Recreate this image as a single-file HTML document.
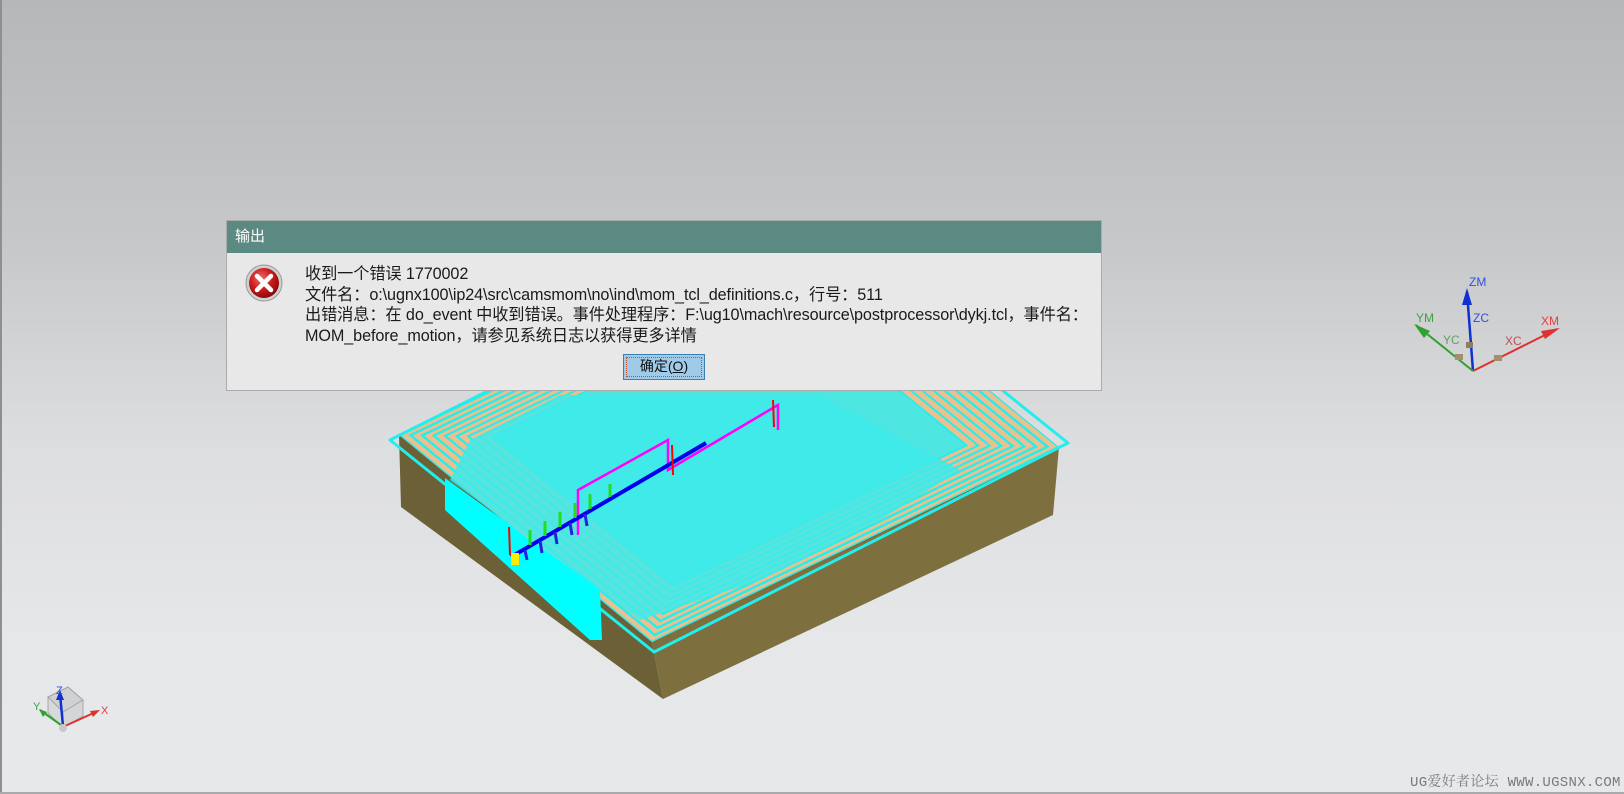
<!DOCTYPE html>
<html><head><meta charset="utf-8"><style>
html,body{margin:0;padding:0}
body{width:1624px;height:794px;overflow:hidden;position:relative;background:linear-gradient(to bottom,#b6b7b9 0%,#c6c7c9 30%,#dcdddf 55%,#e6e7e9 80%,#e7e8ea 100%);font-family:"Liberation Sans","Noto Sans CJK SC",sans-serif}
.lb{position:absolute;left:0;top:0;width:2px;height:794px;background:#8a9096}
.bb{position:absolute;left:0;bottom:0;width:1624px;height:2px;background:#a8abae}
.dlg{position:absolute;left:226px;top:220px;width:876px;height:171px;background:#e8e8e8;border:1px solid #a9abad;box-sizing:border-box}
.tt{height:32px;background:#5b8a83;color:#fff;font-size:15px;line-height:32px;padding-left:8px}
.msg{position:absolute;left:78px;top:43px;font-size:16.2px;line-height:20.5px;color:#1a1a1a;white-space:nowrap;letter-spacing:-0.1px}
.btn{position:absolute;left:396px;top:133px;width:82px;height:26px;box-sizing:border-box;border:1px solid #3c7fb1;background:#9fcbe8;font-size:14px;text-align:center;line-height:22px;color:#111}
.btn span{position:absolute;left:2px;top:2px;right:2px;bottom:2px;border:1px dotted #c05030}
.wm{position:absolute;left:1410px;top:771px;font-family:"Liberation Mono","Noto Serif CJK SC",monospace;font-size:14px;color:#7a7a7a;white-space:nowrap;letter-spacing:0.3px}
</style></head><body>
<div class="lb"></div><div class="bb"></div>
<svg width="1624" height="794" style="position:absolute;left:0;top:0">
<defs>
<clipPath id="tc"><polygon points="399,435 806,240 1059,447 652,642"/></clipPath>
</defs>
<polygon points="399,435 652,642 663,699 401,507" fill="#6c6036"/>
<polygon points="652,642 1059,447 1053,515 663,699" fill="#7d703e"/>
<polygon points="399,435 806,240 1059,447 652,642" fill="#e9c08f"/>
<g clip-path="url(#tc)" fill="none" stroke="#22eeee" stroke-width="2.5">
<g transform="translate(729,441)">
<polygon points="-330,-6 77,-201 330,6 -77,201" transform="scale(1.0)"/>
<polygon points="-330,-6 77,-201 330,6 -77,201" transform="scale(0.965)"/>
<polygon points="-330,-6 77,-201 330,6 -77,201" transform="scale(0.93)"/>
<polygon points="-330,-6 77,-201 330,6 -77,201" transform="scale(0.895)"/>
<polygon points="-330,-6 77,-201 330,6 -77,201" transform="scale(0.86)"/>
<polygon points="-330,-6 77,-201 330,6 -77,201" transform="scale(0.825)"/>
<polygon points="-330,-6 77,-201 330,6 -77,201" transform="scale(0.79)"/>
<polygon points="-330,-6 77,-201 330,6 -77,201" transform="scale(0.755)"/>
<polygon points="-330,-6 77,-201 330,6 -77,201" transform="scale(0.72)" fill="#3deaea" fill-opacity="0.9"/>
</g>
</g>
<polygon points="390,440 805,232 1068,443 654,652" fill="none" stroke="#22eeee" stroke-width="3" stroke-linejoin="round"/>
<polygon points="470,440 560,395 820,395 960,470 880,520 760,580 640,620 450,480" fill="#3eeaea" opacity="0.85"/>
<polygon points="445,478 600,590 602,640 590,640 445,510" fill="#00ffff"/>
<polyline points="578,535 578,490 668,440 668,470 778,405 778,430" fill="none" stroke="#ff00ff" stroke-width="2.5"/>
<line x1="511" y1="557" x2="706" y2="443" stroke="#0000ee" stroke-width="4"/>
<g stroke="#22dd22" stroke-width="3"><line x1="530" y1="545" x2="530" y2="530"/><line x1="545" y1="536" x2="545" y2="521"/><line x1="560" y1="527" x2="560" y2="512"/><line x1="575" y1="518" x2="575" y2="503"/><line x1="590" y1="509" x2="590" y2="494"/><line x1="610" y1="497" x2="610" y2="484"/></g>
<g stroke="#2222dd" stroke-width="3"><line x1="525" y1="550" x2="527" y2="560"/><line x1="540" y1="541" x2="542" y2="553"/><line x1="555" y1="532" x2="557" y2="544"/><line x1="570" y1="523" x2="572" y2="535"/><line x1="585" y1="514" x2="587" y2="526"/></g>
<line x1="509" y1="527" x2="510" y2="555" stroke="#ff0000" stroke-width="2"/>
<line x1="672" y1="445" x2="673" y2="475" stroke="#ff0000" stroke-width="2"/>
<line x1="773" y1="400" x2="774" y2="427" stroke="#ff0000" stroke-width="2"/>
<rect x="511" y="553" width="8" height="12" fill="#ffee00"/>
<g font-family="Liberation Sans,sans-serif" font-size="12">
<line x1="1473" y1="371" x2="1467" y2="292" stroke="#1030d0" stroke-width="2.5"/>
<polygon points="1467,288 1462,305 1472,305" fill="#1030d0"/>
<line x1="1473" y1="371" x2="1557" y2="329" stroke="#e03030" stroke-width="2"/>
<polygon points="1560,328 1541,331 1545,339" fill="#e03030"/>
<line x1="1473" y1="371" x2="1416" y2="325" stroke="#30a030" stroke-width="2"/>
<polygon points="1414,324 1424,338 1430,331" fill="#30a030"/>
<rect x="1466" y="342" width="7" height="6" fill="#8a8060"/>
<rect x="1494" y="355" width="8" height="6" fill="#a09070"/>
<rect x="1455" y="354" width="8" height="6" fill="#a09070"/>
<text x="1469" y="286" fill="#3050e0">ZM</text>
<text x="1473" y="322" fill="#3050e0">ZC</text>
<text x="1541" y="325" fill="#e04040">XM</text>
<text x="1505" y="345" fill="#c05050">XC</text>
<text x="1416" y="322" fill="#40a040">YM</text>
<text x="1443" y="344" fill="#60a060">YC</text>
</g>
<g font-family="Liberation Sans,sans-serif" font-size="11">
<polygon points="48,697 68,687 83,700 63,712" fill="#d0d1d3" stroke="#a0a0a0"/>
<polygon points="48,697 63,712 63,728 48,713" fill="#d8d9db" stroke="#a8a8a8"/>
<polygon points="63,712 83,700 83,716 63,728" fill="#d4d5d7" stroke="#a8a8a8"/>
<line x1="63" y1="726" x2="60" y2="694" stroke="#1030d0" stroke-width="2.5"/>
<polygon points="60,690 56,700 64,700" fill="#1030d0"/>
<line x1="65" y1="726" x2="98" y2="711" stroke="#e03030" stroke-width="2"/>
<polygon points="100,710 90,711 93,717" fill="#e03030"/>
<line x1="61" y1="725" x2="40" y2="710" stroke="#30a030" stroke-width="2"/>
<polygon points="39,709 43,717 47,712" fill="#30a030"/>
<circle cx="63" cy="728" r="4" fill="#c8c8c8"/>
<text x="56" y="694" fill="#3050e0">Z</text>
<text x="101" y="714" fill="#e04040">X</text>
<text x="33" y="710" fill="#40a040">Y</text>
</g>
</svg>
<div class="dlg">
<div class="tt">输出</div>
<svg width="40" height="40" style="position:absolute;left:17px;top:42px">
<defs><radialGradient id="rg" cx="40%" cy="35%" r="65%"><stop offset="0" stop-color="#f06a6a"/><stop offset="0.6" stop-color="#c8191b"/><stop offset="1" stop-color="#8a0c0c"/></radialGradient></defs>
<circle cx="20" cy="20" r="18" fill="#d0d0d0" stroke="#9a9a9a"/>
<circle cx="20" cy="20" r="15" fill="url(#rg)"/>
<path d="M13,13 L27,27 M27,13 L13,27" stroke="#fff" stroke-width="4.5" stroke-linecap="round"/>
</svg>
<div class="msg">收到一个错误 1770002<br>文件名：o:\ugnx100\ip24\src\camsmom\no\ind\mom_tcl_definitions.c，行号：511<br>出错消息：在 do_event 中收到错误。事件处理程序：F:\ug10\mach\resource\postprocessor\dykj.tcl，事件名：<br>MOM_before_motion，请参见系统日志以获得更多详情</div>
<div class="btn"><span></span>确定(<u>O</u>)</div>
</div>
<div class="wm">UG爱好者论坛 WWW.UGSNX.COM</div>
</body></html>
